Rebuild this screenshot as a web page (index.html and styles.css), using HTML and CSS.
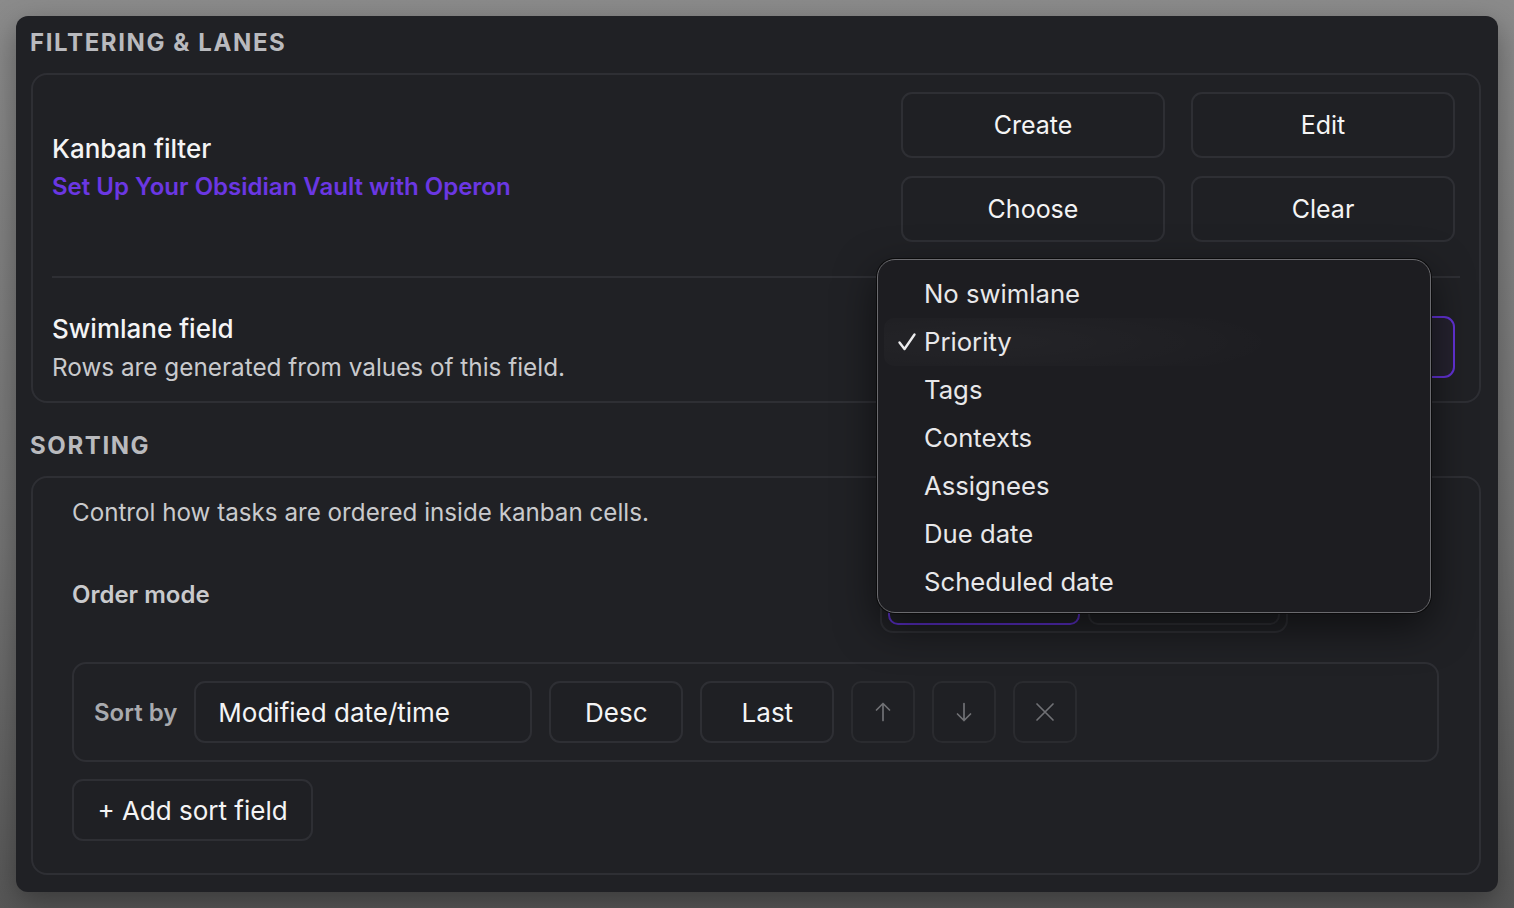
FILE: index.html
```html
<!DOCTYPE html>
<html>
<head>
    <meta charset="UTF-8">
    <title>Kanban settings</title>
    <link rel="stylesheet" href="styles.css">
</head>
<body>
    <div class="panel">
        <h2 class="section-title">Filtering &amp; Lanes</h2>
        <div class="card">
            <div class="setting setting-filter">
                <div class="setting-info">
                    <div class="setting-name">Kanban filter</div>
                    <a class="setting-link">Set Up Your Obsidian Vault with Operon</a>
                </div>
                <div class="btn-grid">
                    <button class="btn">Create</button>
                    <button class="btn">Edit</button>
                    <button class="btn">Choose</button>
                    <button class="btn">Clear</button>
                </div>
            </div>
            <div class="setting setting-lane">
                <div class="setting-info">
                    <div class="setting-name">Swimlane field</div>
                    <div class="setting-desc">Rows are generated from values of this field.</div>
                </div>
                <div class="select select-active"></div>
            </div>
        </div>

        <h2 class="section-title">Sorting</h2>
        <div class="card card-sort">
            <div class="sort-desc">Control how tasks are ordered inside kanban cells.</div>
            <div class="order-row">
                <div class="order-label">Order mode</div>
                <div class="segmented">
                    <button class="seg seg-on"></button>
                    <button class="seg"></button>
                </div>
            </div>
            <div class="sort-row">
                <span class="sort-label">Sort by</span>
                <div class="select sort-field">Modified date/time</div>
                <button class="btn btn-small">Desc</button>
                <button class="btn btn-small">Last</button>
                <button class="icon-btn">
                    <svg width="22" height="22" viewBox="0 0 22 22" fill="none" stroke="currentColor" stroke-width="1.7" stroke-linecap="round" stroke-linejoin="round"><path d="M11 19.5V2.5M4.5 9 11 2.5 17.5 9"/></svg>
                </button>
                <button class="icon-btn">
                    <svg width="22" height="22" viewBox="0 0 22 22" fill="none" stroke="currentColor" stroke-width="1.7" stroke-linecap="round" stroke-linejoin="round"><path d="M11 2.5v17M4.5 13 11 19.5 17.5 13"/></svg>
                </button>
                <button class="icon-btn">
                    <svg width="22" height="22" viewBox="0 0 22 22" fill="none" stroke="currentColor" stroke-width="1.7" stroke-linecap="round"><path d="M3 3l16 16M19 3 3 19"/></svg>
                </button>
            </div>
            <button class="btn btn-add">+ Add sort field</button>
        </div>

        <ul class="menu">
            <li class="menu-item">No swimlane</li>
            <li class="menu-item menu-item-on">
                <svg class="check" width="20" height="20" viewBox="0 0 20 20" fill="none" stroke="currentColor" stroke-width="2.4" stroke-linecap="round" stroke-linejoin="round"><path d="M2.5 10.5 7.5 17 17.5 2.5"/></svg>Priority
            </li>
            <li class="menu-item">Tags</li>
            <li class="menu-item">Contexts</li>
            <li class="menu-item">Assignees</li>
            <li class="menu-item">Due date</li>
            <li class="menu-item">Scheduled date</li>
        </ul>
    </div>
</body>
</html>
```

FILE: styles.css
```css
* {
    box-sizing: border-box;
}
body {
    margin: 0;
    padding: 16px;
    height: 908px;
    overflow: hidden;
    background: linear-gradient(180deg, #8b8b8b 0%, #747474 60%, #575757 100%);
    font-family: Inter, "Noto Sans", sans-serif;
    color: #f2f2f3;
}
button {
    font-family: inherit;
}
.panel {
    position: relative;
    width: 1482px;
    height: 876px;
    padding: 11px 17px 0 15px;
    background: #202125;
    border-radius: 12px;
    box-shadow: 0 10px 30px rgba(0, 0, 0, 0.35);
}
.section-title {
    margin: 0 0 14px -1px;
    font-size: 24px;
    line-height: 32px;
    font-weight: 700;
    letter-spacing: 1.6px;
    text-transform: uppercase;
    color: #b9babe;
}
.card {
    border: 2px solid #2e2f34;
    border-radius: 16px;
    margin-bottom: 27px;
}

/* setting rows */
.setting {
    display: flex;
    align-items: center;
    justify-content: space-between;
}
.setting-filter {
    padding: 17px 24px 34px 19px;
}
.setting-lane {
    margin: 0 19px;
    padding: 34px 5px 19px 0;
    border-top: 2px solid #2e2f34;
}
.setting-name {
    font-size: 26px;
    line-height: 34px;
    font-weight: 500;
    color: #f4f4f5;
}
.setting-link {
    display: block;
    margin-top: 6px;
    font-size: 24px;
    line-height: 30px;
    font-weight: 600;
    color: #6b37e3;
}
.setting-desc {
    margin-top: 6px;
    font-size: 24.3px;
    line-height: 30px;
    color: #c9cacd;
}
.btn-grid {
    display: grid;
    grid-template-columns: 264px 264px;
    column-gap: 26px;
    row-gap: 18px;
}
.btn {
    height: 66px;
    border: 2px solid #2e2f34;
    border-radius: 11px;
    background: #1f2024;
    color: #f4f4f5;
    font-size: 25px;
}
.select {
    display: flex;
    align-items: center;
    height: 62px;
    padding: 0 22px;
    border: 2px solid #2e2f34;
    border-radius: 11px;
    background: #1f2024;
    font-size: 26px;
    color: #f4f4f5;
}
.select-active {
    width: 264px;
    border-color: #6232d6;
    background: #25222f;
}

/* sorting */
.card-sort {
    margin-bottom: 0;
    padding: 16px 40px 32px 39px;
}
.sort-desc {
    font-size: 24.2px;
    line-height: 38px;
    color: #c9cacd;
}
.order-row {
    display: flex;
    align-items: center;
    margin-top: 29px;
}
.order-label {
    width: 808px;
    margin-top: -6px;
    font-size: 24px;
    font-weight: 600;
    color: #c9cacd;
}
.segmented {
    display: flex;
    gap: 8px;
    padding: 6px;
    border: 2px solid #2e2f34;
    border-radius: 13px;
}
.seg {
    width: 192px;
    height: 56px;
    border: 2px solid #2e2f34;
    border-radius: 10px;
    background: #1f2024;
}
.seg-on {
    border-color: #5a2fc6;
}
.sort-row {
    display: flex;
    align-items: center;
    gap: 17px;
    margin-top: 29px;
    padding: 17px 20px;
    border: 2px solid #2e2f34;
    border-radius: 14px;
}
.sort-label {
    font-size: 24px;
    font-weight: 600;
    color: #a9aaae;
}
.sort-field {
    width: 338px;
}
.btn-small {
    width: 134px;
    height: 62px;
    font-size: 26px;
}
.icon-btn {
    display: flex;
    align-items: center;
    justify-content: center;
    width: 64px;
    height: 62px;
    border: 2px solid #2a2b2f;
    border-radius: 10px;
    background: #1f2024;
    color: #707175;
}
.btn-add {
    display: block;
    width: 241px;
    height: 62px;
    margin-top: 17px;
    font-size: 26px;
}

/* dropdown menu over the swimlane select */
.menu {
    position: absolute;
    left: 861px;
    top: 243px;
    width: 554px;
    height: 354px;
    margin: 0;
    padding: 10px 6px;
    list-style: none;
    background: #1d1d21;
    border: 1px solid #6a6a6e;
    border-radius: 18px;
    box-shadow: 0 0 0 1px #0b0b0c, 0 14px 40px rgba(0, 0, 0, 0.55);
}
.menu-item {
    position: relative;
    height: 48px;
    padding-left: 40px;
    font-size: 25.7px;
    line-height: 48px;
    color: #e8e8ea;
    border-radius: 10px;
}
.menu-item-on {
    background: radial-gradient(ellipse 55% 90% at 18% 50%, rgba(255, 255, 255, 0.03), rgba(255, 255, 255, 0.008) 80%, rgba(255, 255, 255, 0));
}
.check {
    position: absolute;
    left: 13px;
    top: 14px;
    color: #ececee;
}
```
